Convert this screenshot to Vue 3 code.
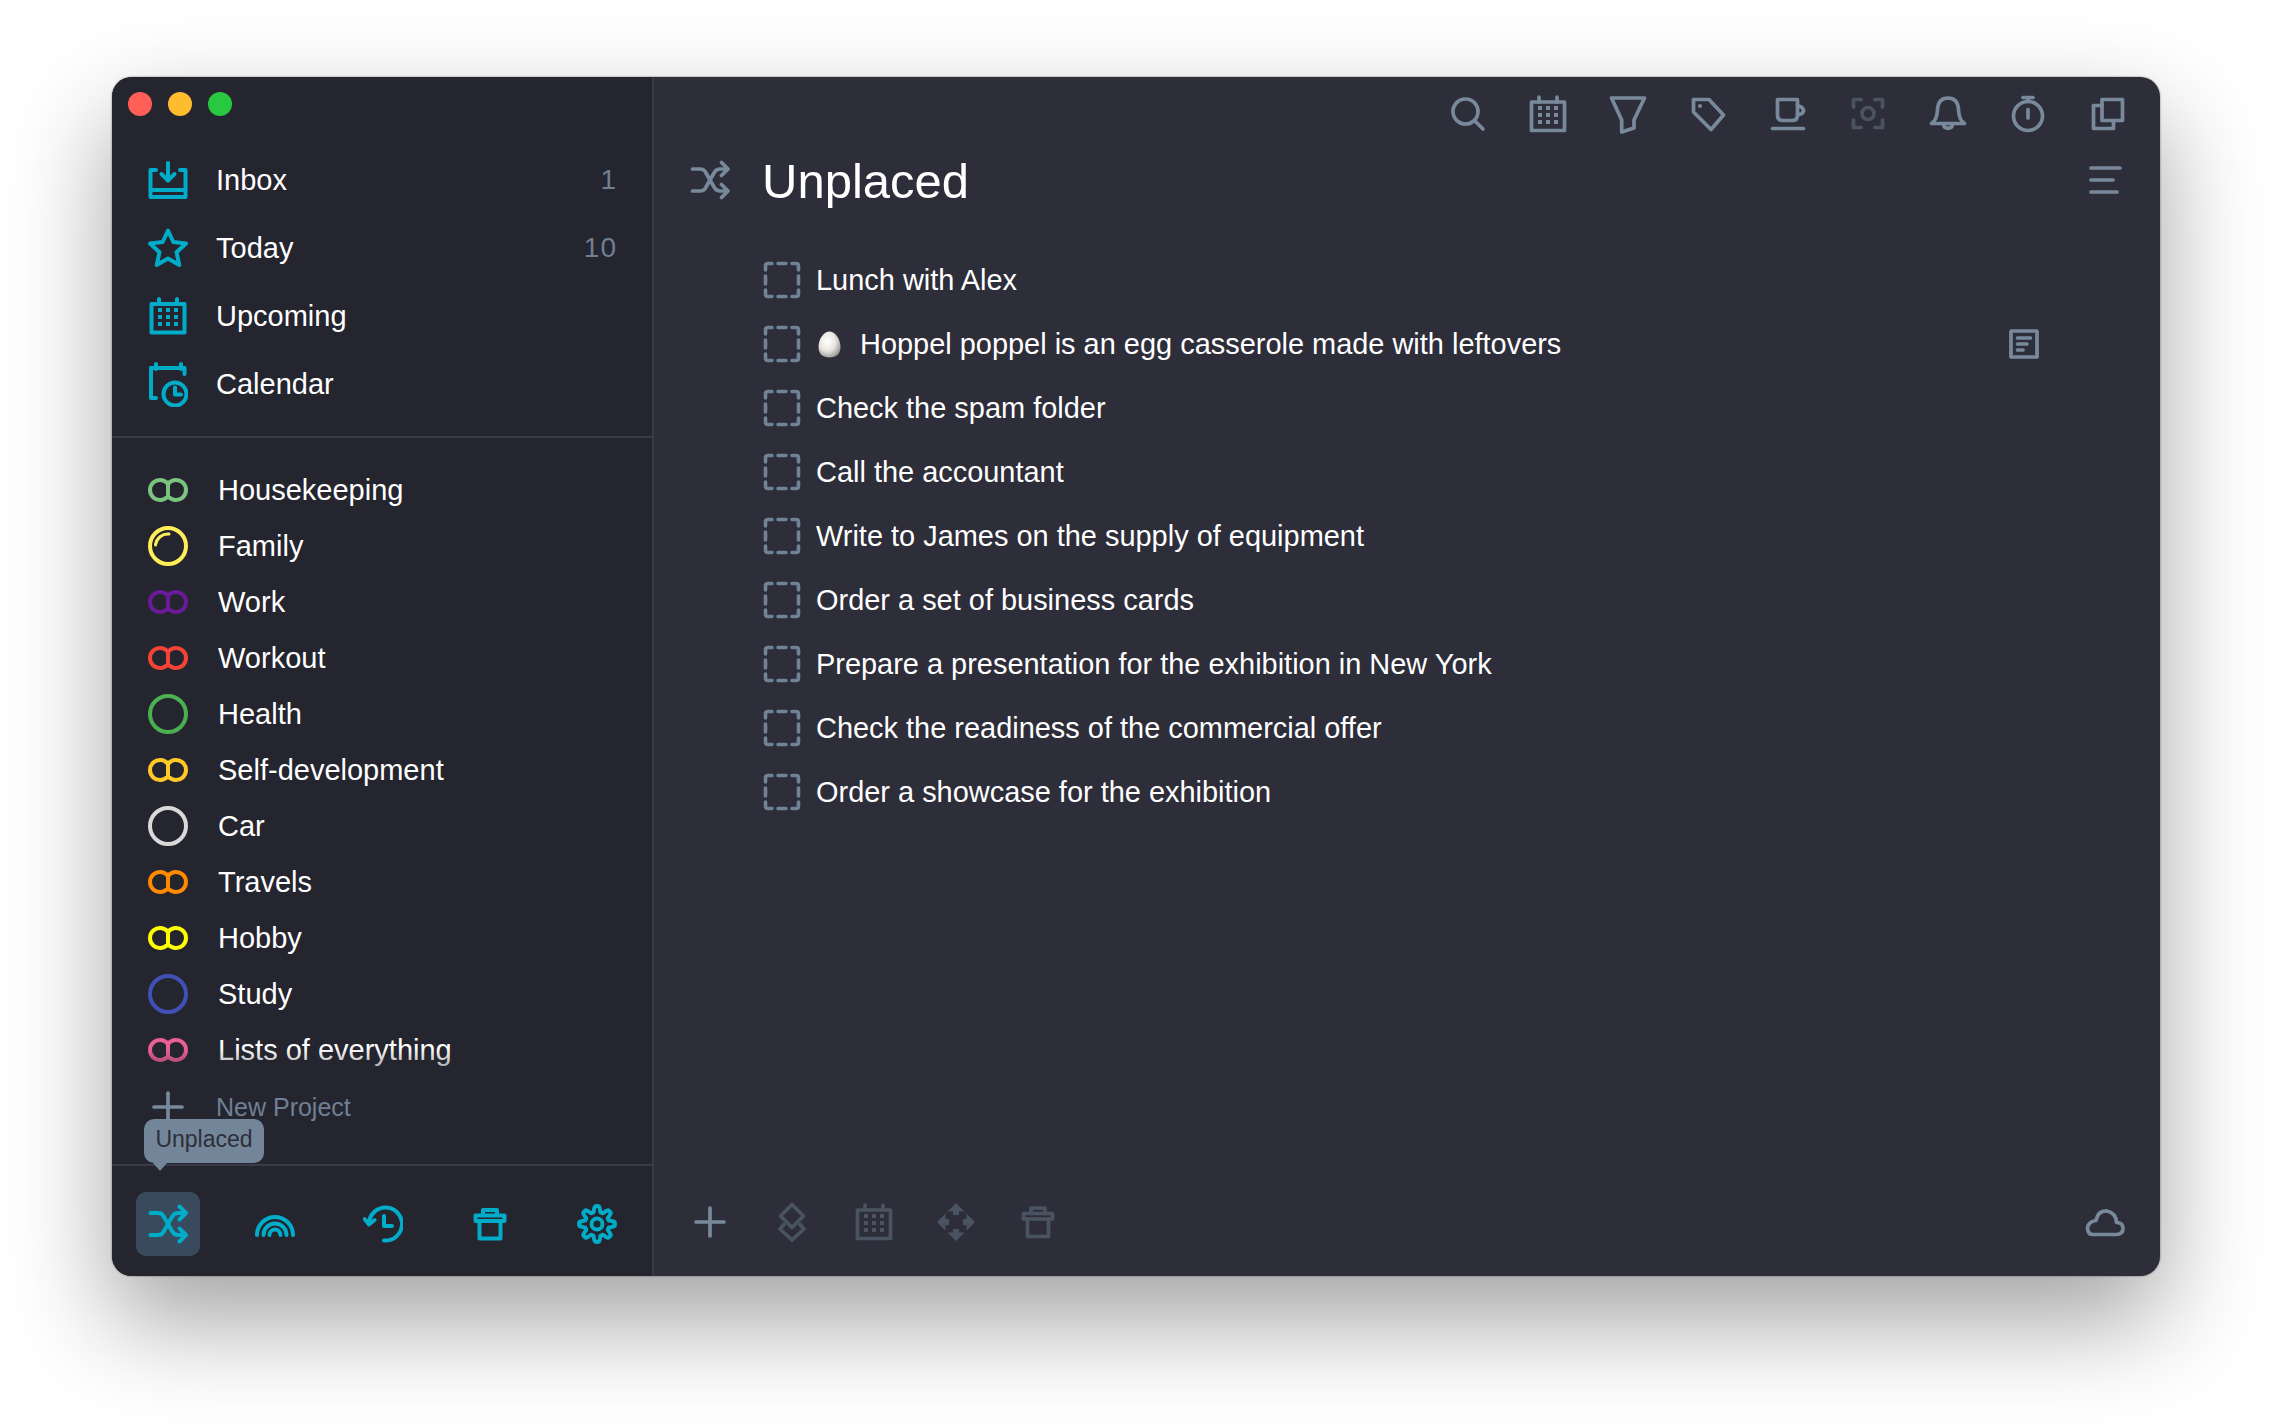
<script setup>
const gearPath = (() => {
  const pts = []
  for (let i = 0; i < 160; i++) {
    const t = (i / 160) * Math.PI * 2
    const w = Math.max(-1, Math.min(1, Math.cos(8 * t) * 1.5))
    const r = 15 + 2.9 * w
    pts.push(`${(20 + r * Math.sin(t)).toFixed(2)} ${(20 - r * Math.cos(t)).toFixed(2)}`)
  }
  return 'M' + pts.join('L') + 'Z'
})()

const calDots = [12, 20, 28]
  .flatMap((x) => [14, 21, 28].map((y) => `<rect x="${x - 2}" y="${y - 2}" width="4" height="4" fill="currentColor" stroke="none"/>`))
  .join('')
const calendar = `<path d="M3.500 8H36.500V36.500H3.500Z"/><path d="M11 3V8M29 3V8"/>${calDots}`
const shuffle = '<path d="M2.500 9H10C13 9 15 10.500 16 13L24 27C25.500 30 27 31 30 31H37"/><path d="M2.500 31H10C13 31 15 29.500 16 27L24 13C25.500 10 27 9 30 9H37"/><path d="M31.500 2.500L38 9L31.500 15.500M31.500 24.500L38 31L31.500 37.500"/>'
const trash = '<path d="M5.500 11.500H34.500V17H5.500Z"/><path d="M13 11V6H27V11"/><path d="M9.500 17V34.500H30.500V17"/>'
const plus = '<path d="M20 6V34M6 20H34"/>'
const arrow = '<path d="M20 1L28.500 9.500H23V13H17V9.500H11.500Z" fill="currentColor" stroke="none"/>'

const icons = {
  inbox: '<path d="M8 10H2.500V37H37.500V10H32"/><path d="M2.500 30H37.500"/><path d="M20 3V20"/><path d="M13.500 14L20 20.500L26.500 14"/>',
  star: '<path d="M20 2.500L25.300 14L38 15.500L28.500 24.300L31.300 37L20 30.500L8.700 37L11.500 24.300L2 15.500L14.700 14Z"/>',
  calendar,
  calClock: '<path d="M8 3V8M33 3V8"/><path d="M3 7H36.500V13"/><path d="M3 7V37H8"/><circle cx="27" cy="33" r="11.500"/><path d="M27 26.500V33.500H33"/>',
  shuffle,
  rainbow: '<path d="M2 31A18 18 0 0 1 38 31M8.500 31A11.500 11.500 0 0 1 31.500 31M14.500 31A5.500 5.500 0 0 1 25.500 31"/>',
  history: '<path d="M6 19A16.500 16.500 0 1 1 21 36.500"/><path d="M1.500 15L6 20.500L11.500 16"/><path d="M21 12V22H29"/>',
  trash,
  gear: `<path d="${gearPath}"/><circle cx="20" cy="20" r="5.500"/>`,
  search: '<circle cx="17.500" cy="17.500" r="12.500"/><path d="M27 27L35 35"/>',
  filter: '<path d="M3.500 4H36.500L26 26V34L13.700 38V26Z"/>',
  tag: '<path d="M5.500 5.500H21L35.500 21L23 35.500L5.500 18Z"/><circle cx="12" cy="12" r="2" fill="currentColor" stroke="none"/>',
  cup: '<path d="M9.500 5.500H29.500V21Q29.500 26.500 24 26.500H15Q9.500 26.500 9.500 21Z"/><path d="M29.500 11.500L34 13.500Q37 16.500 34 19.500L29.500 21"/><path d="M4.500 34.500H35.500"/>',
  focus: '<path d="M5.500 13V5.500H13M27 5.500H34.500V13M34.500 26V33.500H27M13 33.500H5.500V26"/><circle cx="20" cy="19.500" r="6"/>',
  bell: '<path d="M3.500 29.500Q9 26 9.500 16Q10 4 20 4Q30 4 30.500 16Q31 26 36.500 29.500Z"/><path d="M15.500 31A4.700 4.700 0 0 0 24.500 31"/>',
  timer: '<circle cx="20" cy="22" r="14.500"/><path d="M15 3.500H25M20 3.500V7.500M20 15.500V24"/>',
  copy: '<path d="M14 11.500H5.500V34.500H25.500V27"/><path d="M14 5.500H34.500V26.500H14Z"/>',
  menu: '<path d="M6 8H35M6 20H28M6 32H32"/>',
  plus,
  layers: '<path d="M20 2.500L31.500 14L20 25.500L8.500 14Z"/><path d="M12 22.500L8 27L20 38L32 27L28 22.500"/>',
  move: `${arrow}<g transform="rotate(90 20 20)">${arrow}</g><g transform="rotate(180 20 20)">${arrow}</g><g transform="rotate(270 20 20)">${arrow}</g>`,
  cloud: '<path d="M8 32.500H31Q38 32.500 38 26.500Q38 20.500 31.500 20.500Q31 11 22 9Q13 8.500 11 18.500Q2.500 20 2.500 26.500Q3 32.500 8 32.500Z"/>',
  note: '<path d="M7 7H33V33H7Z"/><path d="M13.500 14H26.500M13.500 20H23M13.500 26H19"/>',
  check: '<path d="M2.500 9V5Q2.500 2.500 5 2.500H9M15 2.500H23M29 2.500H33Q35.500 2.500 35.500 5V9M35.500 15V23M35.500 29V33Q35.500 35.500 33 35.500H29M23 35.500H15M9 35.500H5Q2.500 35.500 2.500 33V29M2.500 23V15"/>',
}

const nav = [
  { name: 'Inbox', icon: 'inbox', count: '1' },
  { name: 'Today', icon: 'star', count: '10' },
  { name: 'Upcoming', icon: 'calendar' },
  { name: 'Calendar', icon: 'calClock', tall: true },
]

const projects = [
  { name: 'Housekeeping', color: '#7bc47f', kind: 'double' },
  { name: 'Family', color: '#ffee58', kind: 'family' },
  { name: 'Work', color: '#6a1b9a', kind: 'double' },
  { name: 'Workout', color: '#f44336', kind: 'double' },
  { name: 'Health', color: '#4caf50', kind: 'single' },
  { name: 'Self-development', color: '#ffca28', kind: 'double' },
  { name: 'Car', color: '#d9d9d9', kind: 'single' },
  { name: 'Travels', color: '#ff8a00', kind: 'double' },
  { name: 'Hobby', color: '#ffff00', kind: 'double' },
  { name: 'Study', color: '#3f51b5', kind: 'single' },
  { name: 'Lists of everything', color: '#ec5f95', kind: 'double' },
]

const sideButtons = ['shuffle', 'rainbow', 'history', 'trash', 'gear']

const tools = [
  { icon: 'search' },
  { icon: 'calendar' },
  { icon: 'filter' },
  { icon: 'tag' },
  { icon: 'cup' },
  { icon: 'focus', dim: true },
  { icon: 'bell' },
  { icon: 'timer' },
  { icon: 'copy' },
]

const tasks = [
  { text: 'Lunch with Alex' },
  { text: 'Hoppel poppel is an egg casserole made with leftovers', egg: true, note: true },
  { text: 'Check the spam folder' },
  { text: 'Call the accountant' },
  { text: 'Write to James on the supply of equipment' },
  { text: 'Order a set of business cards' },
  { text: 'Prepare a presentation for the exhibition in New York' },
  { text: 'Check the readiness of the commercial offer' },
  { text: 'Order a showcase for the exhibition' },
]

const footerTools = [
  { icon: 'plus' },
  { icon: 'layers', dim: true },
  { icon: 'calendar', dim: true },
  { icon: 'move', dim: true },
  { icon: 'trash', dim: true },
]
</script>

<template>
  <div class="page">
    <div class="window">
      <aside class="sidebar">
        <div class="lights">
          <span class="light red"></span>
          <span class="light yellow"></span>
          <span class="light green"></span>
        </div>

        <nav class="nav">
          <div v-for="item in nav" :key="item.name" class="nav-row">
            <svg
              class="ic teal"
              :class="{ tall: item.tall }"
              :viewBox="item.tall ? '0 0 40 46' : '0 0 40 40'"
              v-html="icons[item.icon]"
            ></svg>
            <span class="nav-name">{{ item.name }}</span>
            <span v-if="item.count" class="count">{{ item.count }}</span>
          </div>
        </nav>

        <div class="projects">
          <div class="project-list">
            <div v-for="p in projects" :key="p.name" class="project-row">
              <svg class="ring" viewBox="0 0 40 40" :style="{ color: p.color }">
                <path
                  v-if="p.kind === 'double'"
                  d="M20 14A10 10 0 1 0 20 26A10 10 0 1 0 20 14V26"
                />
                <template v-else>
                  <circle cx="20" cy="20" r="18" />
                  <path v-if="p.kind === 'family'" class="arc" d="M7.500 19A12.500 12.500 0 0 1 21 8" />
                </template>
              </svg>
              <span class="project-name">{{ p.name }}</span>
            </div>
          </div>
          <div class="new-project">
            <svg class="ic slate" viewBox="0 0 40 40" v-html="icons.plus"></svg>
            <span>New Project</span>
          </div>
        </div>

        <div class="side-footer">
          <div class="tooltip">Unplaced</div>
          <button
            v-for="(b, i) in sideButtons"
            :key="b"
            class="side-btn"
            :class="{ active: i === 0 }"
          >
            <svg class="ic teal" viewBox="0 0 40 40" v-html="icons[b]"></svg>
          </button>
        </div>
      </aside>

      <main class="main">
        <div class="toolbar">
          <svg
            v-for="t in tools"
            :key="t.icon"
            class="ic"
            :class="t.dim ? 'dim' : 'slate'"
            viewBox="0 0 40 40"
            v-html="icons[t.icon]"
          ></svg>
        </div>

        <header class="title-row">
          <svg class="ic slate" viewBox="0 0 40 40" v-html="icons.shuffle"></svg>
          <h1 class="title">Unplaced</h1>
          <svg class="ic slate menu" viewBox="0 0 40 40" v-html="icons.menu"></svg>
        </header>

        <ul class="tasks">
          <li v-for="t in tasks" :key="t.text" class="task">
            <svg class="check" viewBox="0 0 38 38" v-html="icons.check"></svg>
            <svg v-if="t.egg" class="egg" viewBox="0 0 23 27">
              <defs>
                <radialGradient id="eggFill" cx="0.4" cy="0.38" r="0.72">
                  <stop offset="0" stop-color="#ffffff" />
                  <stop offset="0.5" stop-color="#ebe8e3" />
                  <stop offset="1" stop-color="#8f8d87" />
                </radialGradient>
              </defs>
              <path d="M11.500 0.500C17 0.500 22.500 8 22.500 16C22.500 23 18 26.500 11.500 26.500C5 26.500 0.500 23 0.500 16C0.500 8 6 0.500 11.500 0.500Z" fill="url(#eggFill)" />
            </svg>
            <span class="task-text">{{ t.text }}</span>
            <svg v-if="t.note" class="ic slate note" viewBox="0 0 40 40" v-html="icons.note"></svg>
          </li>
        </ul>

        <footer class="main-footer">
          <svg
            v-for="(f, i) in footerTools"
            :key="i"
            class="ic"
            :class="f.dim ? 'dim' : 'slate'"
            viewBox="0 0 40 40"
            v-html="icons[f.icon]"
          ></svg>
          <svg class="ic slate cloud" viewBox="0 0 40 40" v-html="icons.cloud"></svg>
        </footer>
      </main>
    </div>
  </div>
</template>

<style>
html,
body {
  margin: 0;
  background: #fff;
}
</style>

<style scoped>
.page {
  box-sizing: border-box;
  width: 2272px;
  height: 1424px;
  padding: 77px 112px 0;
  overflow: hidden;
  background: #fff;
}
.window {
  display: flex;
  width: 2048px;
  height: 1199px;
  border-radius: 20px;
  overflow: hidden;
  background: #2d2e3a;
  color: #fff;
  font-family: "Liberation Sans", Arial, sans-serif;
  box-shadow: 0 0 2px rgba(0, 0, 0, 0.55), 0 44px 100px 2px rgba(0, 0, 0, 0.36);
}

.ic {
  display: block;
  flex: none;
  width: 40px;
  height: 40px;
  fill: none;
  stroke: currentColor;
  stroke-width: 3.7;
  stroke-linejoin: round;
  stroke-linecap: round;
}
.ic.tall {
  height: 46px;
}
.teal {
  stroke-width: 4;
  color: #00acc8;
}
.slate {
  color: #78899c;
}
.dim {
  color: #4a5361;
}

.sidebar {
  display: flex;
  flex: none;
  flex-direction: column;
  box-sizing: border-box;
  width: 542px;
  border-right: 2px solid #393a47;
  background: #24252e;
}

.lights {
  display: flex;
  gap: 16px;
  padding: 15px 0 30px 16px;
}
.light {
  width: 24px;
  height: 24px;
  border-radius: 50%;
}
.red {
  background: #ff5f57;
}
.yellow {
  background: #febc2e;
}
.green {
  background: #28c840;
}

.nav {
  padding-bottom: 18px;
  border-bottom: 2px solid #393a47;
}
.nav-row {
  display: flex;
  align-items: center;
  height: 68px;
  padding: 0 35px 0 36px;
}
.nav-name {
  margin-left: 28px;
  font-size: 29px;
}
.count {
  margin-left: auto;
  color: #6f8094;
  font-size: 28px;
  letter-spacing: 1px;
}

.projects {
  flex: 1;
  padding-top: 24px;
}
.project-list {
  position: relative;
}
.project-list::after {
  content: "";
  position: absolute;
  left: 0;
  right: 0;
  bottom: 0;
  height: 30px;
  background: linear-gradient(rgba(36, 37, 46, 0), rgba(36, 37, 46, 0.6));
}
.project-row {
  display: flex;
  align-items: center;
  height: 56px;
  padding-left: 36px;
}
.ring {
  flex: none;
  width: 40px;
  height: 40px;
  fill: none;
  stroke: currentColor;
  stroke-width: 4;
}
.arc {
  stroke-width: 3;
  stroke-linecap: round;
}
.project-name {
  margin-left: 30px;
  font-size: 29px;
}
.new-project {
  display: flex;
  align-items: center;
  height: 58px;
  padding-left: 36px;
  color: #6f8094;
  font-size: 25px;
}
.new-project span {
  margin-left: 28px;
}

.side-footer {
  position: relative;
  display: flex;
  gap: 43.300px;
  box-sizing: border-box;
  height: 112px;
  padding: 26px 0 0 24px;
  border-top: 2px solid #393a47;
}
.side-btn {
  display: flex;
  align-items: center;
  justify-content: center;
  width: 64px;
  height: 64px;
  padding: 0;
  border: 0;
  border-radius: 10px;
  background: none;
}
.side-btn.active {
  background: #374a5e;
}
.tooltip {
  position: absolute;
  left: 32px;
  bottom: calc(100% + 3px);
  width: 120px;
  height: 44px;
  border-radius: 10px;
  background: #738699;
  color: #2d2e3a;
  font-size: 23px;
  line-height: 40px;
  text-align: center;
}
.tooltip::after {
  content: "";
  position: absolute;
  left: 9px;
  top: 100%;
  border: 7px solid transparent;
  border-top: 8px solid #738699;
  border-bottom: 0;
}

.main {
  display: flex;
  flex: 1;
  flex-direction: column;
  min-width: 0;
}
.toolbar {
  display: flex;
  justify-content: flex-end;
  gap: 40px;
  padding: 17px 32px 0 0;
}
.title-row {
  display: flex;
  align-items: center;
  height: 60px;
  margin-top: 16px;
  padding: 0 35px 0 36px;
}
.title {
  margin: 2px 0 0 32px;
  font-size: 49px;
  font-weight: 400;
}
.menu {
  margin-left: auto;
}

.tasks {
  margin: 38px 0 0;
  padding: 0 116px 0 109px;
  list-style: none;
}
.task {
  display: flex;
  align-items: center;
  height: 64px;
  font-size: 28.950px;
}
.check {
  flex: none;
  width: 38px;
  height: 38px;
  fill: none;
  stroke: #6f8296;
  stroke-width: 3.6;
  stroke-linecap: round;
  stroke-linejoin: round;
}
.task-text {
  margin-left: 15px;
}
.egg {
  flex: none;
  width: 23px;
  height: 27px;
  margin-left: 17px;
  margin-right: 4px;
}
.note {
  margin-left: auto;
}

.main-footer {
  display: flex;
  align-items: center;
  gap: 42px;
  margin-top: auto;
  padding: 0 35px 34px 36px;
}
.cloud {
  margin-left: auto;
}
</style>
